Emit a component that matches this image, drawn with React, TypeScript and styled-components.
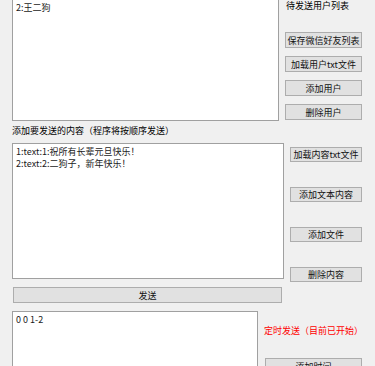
import React from "react";
import styled, { createGlobalStyle } from "styled-components";

const GlobalStyle = createGlobalStyle`
  html, body {
    margin: 0;
    padding: 0;
    background: #f0f0f0;
  }
  body {
    font-family: "Noto Sans CJK SC", "Noto Sans", sans-serif;
    font-size: 9px;
    color: #000;
  }
`;

// the first entry of the user list is scrolled out above the window
const users = ["2:王二狗"];
const contents = ["1:text:1:祝所有长辈元旦快乐！", "2:text:2:二狗子，新年快乐！"];
const times = ["0 0 1-2"];

export default function App() {
  return (
    <Window>
      <GlobalStyle />
      <Row>
        <ListBox $width={267} $height={134} $lift={13} $padTop={14}>
          {users.map((u) => (
            <Item key={u}>{u}</Item>
          ))}
        </ListBox>
        <SideColumn $width={77} $gap={8} $offset={6}>
          <Caption $spaceAfter={12}>待发送用户列表</Caption>
          <Button>保存微信好友列表</Button>
          <Button>加载用户txt文件</Button>
          <Button>添加用户</Button>
          <Button>删除用户</Button>
        </SideColumn>
      </Row>

      <SectionLabel>添加要发送的内容（程序将按顺序发送）</SectionLabel>

      <Row>
        <ListBox $width={272} $height={136}>
          {contents.map((c) => (
            <Item key={c}>{c}</Item>
          ))}
        </ListBox>
        <SideColumn $width={72} $gap={25} $offset={6} $padTop={4}>
          <Button $short>加载内容txt文件</Button>
          <Button $short>添加文本内容</Button>
          <Button $short>添加文件</Button>
          <Button $short>删除内容</Button>
        </SideColumn>
      </Row>

      <SendButton>发送</SendButton>

      <Row>
        <ListBox $width={246} $height={80}>
          {times.map((t) => (
            <Item key={t}>{t}</Item>
          ))}
        </ListBox>
        <SideColumn $width={98} $gap={0} $offset={6} $padTop={14}>
          <Status>定时发送（目前已开始）</Status>
          <Button $indent={1}>添加时间</Button>
        </SideColumn>
      </Row>
    </Window>
  );
}

const Window = styled.div`
  width: 375px;
  height: 366px;
  overflow: hidden;
  background: #f0f0f0;
  padding-left: 12px;
  box-sizing: border-box;
`;

const Row = styled.div`
  display: flex;
  align-items: flex-start;
`;

const ListBox = styled.div<{
  $width: number;
  $height: number;
  $lift?: number;
  $padTop?: number;
}>`
  width: ${({ $width }) => $width}px;
  height: ${({ $height }) => $height}px;
  margin-top: ${({ $lift }) => ($lift ? -$lift : 0)}px;
  flex: none;
  box-sizing: border-box;
  background: #fff;
  border: 1px solid #a0a0a0;
  padding: ${({ $padTop }) => $padTop ?? 2}px 3px 2px;
  overflow: hidden;
`;

const Item = styled.div`
  height: 12px;
  line-height: 12px;
  white-space: nowrap;
  color: #1a1a1a;
`;

const SideColumn = styled.div<{
  $width: number;
  $gap: number;
  $offset: number;
  $padTop?: number;
}>`
  display: flex;
  flex-direction: column;
  width: ${({ $width }) => $width}px;
  gap: ${({ $gap }) => $gap}px;
  margin-left: ${({ $offset }) => $offset}px;
  padding-top: ${({ $padTop }) => $padTop || 0}px;
`;

const Caption = styled.div<{ $spaceAfter: number }>`
  height: 12px;
  line-height: 12px;
  padding-left: 1px;
  margin-bottom: ${({ $spaceAfter }) => $spaceAfter}px;
  white-space: nowrap;
`;

const Button = styled.div<{ $short?: boolean; $indent?: number }>`
  height: ${({ $short }) => ($short ? 15 : 16)}px;
  margin-left: ${({ $indent }) => $indent || 0}px;
  box-sizing: border-box;
  background: #e1e1e1;
  border: 1px solid #adadad;
  display: flex;
  align-items: center;
  justify-content: center;
  white-space: nowrap;
  font-size: 9px;
  color: #111;
`;

const SectionLabel = styled.div`
  height: 12px;
  line-height: 12px;
  margin: 4px 0 6px;
  white-space: nowrap;
`;

const SendButton = styled(Button)`
  width: 269px;
  margin: 5px 0 8px 1px;
`;

const Status = styled.div`
  height: 12px;
  line-height: 12px;
  color: #ff0000;
  white-space: nowrap;
  margin-bottom: 21px;
`;
